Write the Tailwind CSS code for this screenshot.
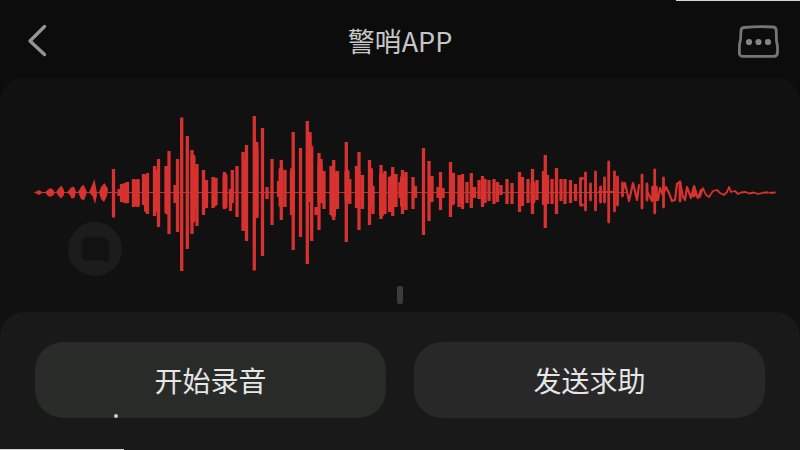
<!doctype html>
<html lang="zh-CN">
<head>
  <meta charset="UTF-8" />
  <meta name="viewport" content="width=device-width, initial-scale=1.0" />
  <title>警哨APP</title>
  <script src="https://cdn.jsdelivr.net/npm/@tailwindcss/browser@4"></script>
</head>
<body class="bg-[#0c0c0c] font-['Noto_Sans_CJK_SC',sans-serif]">

<div class="relative flex min-h-screen flex-col overflow-hidden">
  <div class="absolute top-0 right-0 h-px w-31 bg-[#d4d8d4]"></div>

  <!-- header -->
  <header class="flex h-[78px] items-center justify-between px-5 pt-1">
    <a href="#" aria-label="返回" class="flex w-11 justify-start">
      <svg class="h-9 w-9" viewBox="0 0 36 36" fill="none" stroke="#949494" stroke-width="3.400" stroke-linecap="round" stroke-linejoin="round">
        <path d="M24.5 3.500 L10 18 L24.5 31.500" />
      </svg>
    </a>
    <h1 class="text-[27px] leading-9 text-[#c6c6c6]">警哨APP</h1>
    <button type="button" aria-label="更多" class="flex w-11 justify-end">
      <svg class="h-9 w-11" viewBox="0 0 44 36" fill="none">
        <path d="M8 4.500 Q23 3 37 4 Q40 4.200 40.200 7 L40.500 18 L41.500 23 V30 Q41 33.300 38 33.300 H6.500 Q3.500 33 3.300 30 L3.500 21 L4.500 17 L5 7.500 Q5.200 4.800 8 4.500 Z" stroke="#767676" stroke-width="2.800" stroke-linejoin="round" />
        <g fill="#858585">
          <circle cx="13" cy="19" r="3.100" />
          <circle cx="22.500" cy="19" r="3.100" />
          <circle cx="32" cy="19" r="3.100" />
        </g>
      </svg>
    </button>
  </header>

  <!-- waveform -->
  <main class="relative flex flex-col items-center rounded-t-3xl bg-[#111111] px-6 pt-8 pb-2">
    <svg class="w-full" viewBox="24 110 752 164" fill="none" stroke="#d7322f" stroke-linecap="round" stroke-linejoin="round" role="img" aria-label="录音波形">
      <path stroke="#b03a2c" stroke-width="1" d="M36 192.500 H626" />
      <g fill="#d7322f" stroke="none">
        <path d="M34 192.500 L39 190 L43 192.500 L39 195 Z" />
        <path d="M45 192.500 L48 189.500 L50.500 188 L54 190.500 V195 L50 197 L47.500 195.500 Z" />
        <path d="M56 192 L59 188 L61.500 185.500 L64 190 V195 L61 198.500 L58.500 196 Z" />
        <path d="M67 192.500 L71 187.500 L74 186.500 L76 192 L74.500 198 L71.500 198.500 L70 195 Z" />
        <path d="M78 192 L81 187 L83.500 184.500 L87 192 L84 200.500 L81 199 Z" />
        <path d="M89 192.500 L92 185 L94.500 179 L96.500 190 L97 195 L95 204 L92.500 196 Z" />
        <path d="M99 192 L101 187 L104.500 183 L108 189 L107 196 L104 202 L101 199 Z" />
      </g>
      <!-- blocks of close peaks -->
      <path stroke-width="5" d="M123 186V200 M126 185V201 M134.500 182V204 M137 182V204 M144.500 177V203 M146.500 177V210 M155.500 172V210 M157 172V207 M167.500 170V212 M193 157V220 M195.500 172V205 M205 182V206 M214.500 180V204 M225 176V206 M244.500 162V228 M256 150V215 M281 170V205 M292.500 170V212 M309 138V200 M320 165V201 M333.500 173V215 M347 172V200 M358 172V204 M370.500 170V204 M381.500 175V214 M391.500 178V205 M402.500 178V205 M452 175V203 M461.500 180V202 M520.500 180V203 M533 184V201 M545 176V203" />
      <!-- single peaks -->
      <path stroke-width="3.300" stroke-linecap="butt" d="M113.500 169V217.500 M119 189V196 M121.500 184V202 M127.500 182V203 M133.500 179V207 M138 179V207 M143.500 174V205 M147.500 173V214 M154.500 166V216 M158.500 159V227 M166 166V213 M169 151V234 M175 185V203 M177.500 159V232 M181.700 117.500V271 M187.300 136V249 M192 150V234 M197 164V226 M203.500 170V215 M206.500 180V208 M213 177V208 M216 178V205 M224.500 172V209 M230.500 189V211 M232.300 170V203 M237 166V217 M243 152V231 M246.500 145V241 M254.300 116V270.500 M256.800 142V218 M262.500 128V256 M267 187V199 M272 159V225 M278.500 181V197 M281.300 160V220 M285 170V207 M293.200 132V250 M291.500 172V215 M300.500 148V237 M307.300 121V264 M310 132V201 M311.700 146V241 M316 207V215 M319 153V230 M321 159V203 M324 171V209 M331 166V215 M333.700 160V220 M337.500 171V209 M346.300 142V242 M349.800 179V204 M356.500 166V208 M359 152V230 M362.500 175V209 M369.500 160V225 M373 186V214 M381 165V219 M385 171V214 M389.500 177V212 M392.700 167V216 M396 174V207 M400 182V198 M402.500 170V214 M406 172V210 M413 177V209 M415.500 186V198 M423.500 148V235 M429 161V221 M432 176V202 M438 187V198 M440.500 172V210 M443 188V198 M450.500 162V217 M453.500 173V204 M459 175V207 M462.500 174V209 M467 182V203 M471.300 173V208 M474.500 187V198 M479 180V199 M482.500 176V207 M485 179V203 M489 180V201 M494 179V204 M497.500 182V202 M501 185V195 M507 179V204 M512 183V204 M519.500 172V212 M522.500 177V206 M528 179V203 M532.500 169V214 M537 180V200 M543.500 171V205 M545.300 155V228 M547.500 175V204 M552 179V204 M556.500 168V214 M561 179V201 M565 179V204 M570.500 180V203 M575.500 184V201" />
      <path stroke-width="2.800" d="M582.500 178.500H580.500V205H582.500 M585.500 173V210 M590.500 184V200 M595.500 172V210 M600.500 187V202 M604.500 178V202 M608.700 162V222 M614.500 172V211 M617.500 177V205 M622.500 183V196 M642 175V208 M647 184V200 M654.700 170V213 M663.500 178V207 M680 182V201" />
      <path stroke-width="2.200" d="M599 192H618 M622 193L625 183L629 201L633 183L637 200L639 185 M648 193L652 201L654 187L658 200L660 188L663 195L666 187L669 193L672 201L675 200L677 184L680 182L683 197L685 200L687 187L691 198L694 186L696 195L698 198L701 190" />
      <path stroke-width="2.500" d="M652.500 187V200 M656.500 187V200 M694 189V196" />
      <path stroke-width="1.800" d="M692 196L694.500 187L697 195L700 197L703 188L706 195L709 197L713 191L717 190L720 193L724 195L727 192L729 187L731 192L735 191L738 194L741 192.500L746 192L749 193.500L754 192.500L758 194L764 192.500H768 M770 193L775 192.500" />
    </svg>
    <div class="mt-3 h-[18px] w-[6px] rounded-xs bg-[#3c3c3c]"></div>

    <!-- floating stop button over the waveform -->
    <button type="button" aria-label="停止" class="absolute bottom-9 left-17 flex h-[54px] w-[54px] items-center justify-center rounded-full bg-[#1c1c1c]">
      <svg class="h-8 w-8" viewBox="0 0 32 32" fill="#121212" stroke="#171717">
        <path d="M5 4 H25 L30 9 V27 L27 29 L25 27.500 H6 L3 25 V7 Z" />
      </svg>
    </button>
  </main>

  <!-- actions -->
  <footer class="relative grow bg-[#111111]">
    <div class="relative grid h-full grid-cols-2 gap-7 rounded-t-3xl bg-[#191919] px-[35px] pt-[30px] pb-8">
      <button type="button" class="h-[76px] rounded-[28px] bg-[#292b28] text-[28px] leading-9 text-[#e6e6e6]">开始录音</button>
      <button type="button" class="h-[76px] rounded-[28px] bg-[#282828] text-[28px] leading-9 text-[#e6e6e6]">发送求助</button>
      <div class="absolute bottom-8 left-[114px] h-1 w-1 rounded-full bg-[#d0d0c8]"></div>
    </div>
    <div class="absolute bottom-0 left-0 h-px w-31 bg-[#d4d4d4]"></div>
  </footer>
</div>

</body>
</html>
